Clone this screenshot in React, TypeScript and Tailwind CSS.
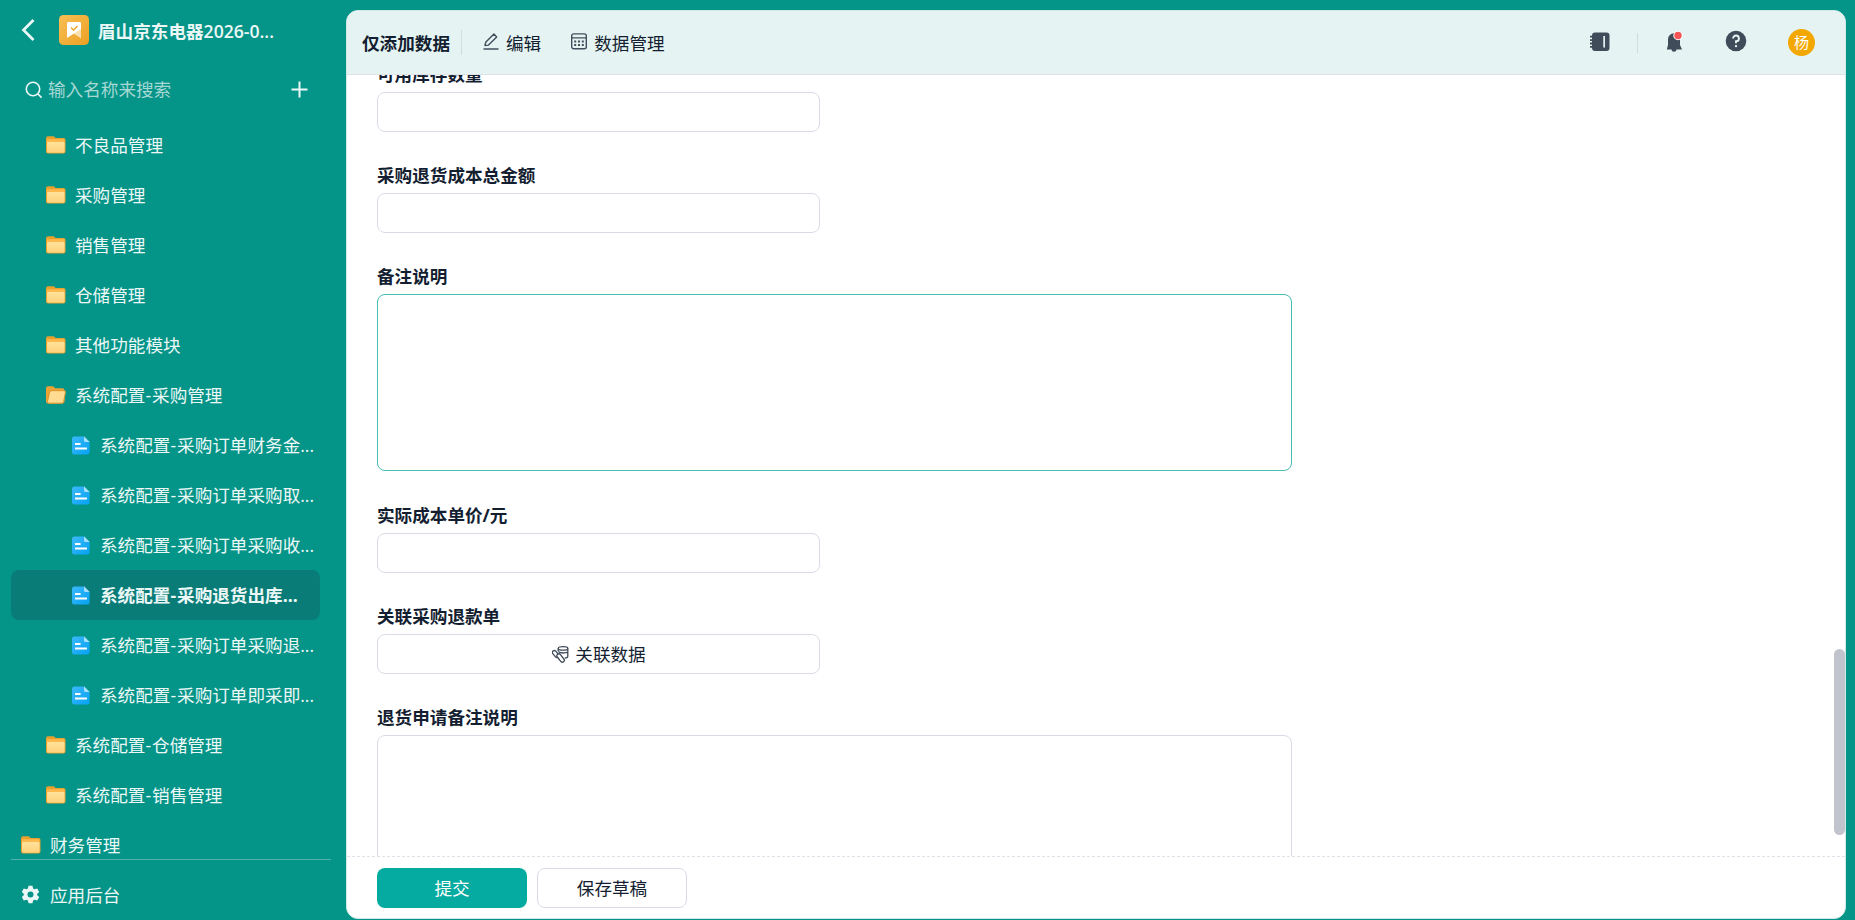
import React from "react";

const CJK = "font-['Open_Sans','Noto_Sans_CJK_SC',sans-serif]";

function Folder() {
  return (
    <svg width="20" height="18" viewBox="0 0 20 18" className="shrink-0">
      <defs>
        <linearGradient id="fold" x1="0" y1="0" x2="0" y2="1">
          <stop offset="0" stopColor="#ffe29c" />
          <stop offset="1" stopColor="#ffd27a" />
        </linearGradient>
      </defs>
      <path d="M2 0.3h5.2c.7 0 1 .2 1.5.7l.9 1H17.5a2 2 0 0 1 2 2V15.5a2 2 0 0 1-2 2H2a2 2 0 0 1-2-2V2.3a2 2 0 0 1 2-2z" fill="#e8a02f" />
      <path d="M1 3.2h17.5v4H1z" fill="#fdb94e" />
      <path d="M1 7.2a1.3 1.3 0 0 1 1.3-1.3h15a1.3 1.3 0 0 1 1.3 1.3v8a1.5 1.5 0 0 1-1.5 1.5H2.5A1.5 1.5 0 0 1 1 15.2z" fill="url(#fold)" />
    </svg>
  );
}

function FolderOpen() {
  return (
    <svg width="20" height="18" viewBox="0 0 20 18" className="shrink-0">
      <path d="M2 0.3h4.5c.7 0 1 .2 1.5.7l1 1.3H16.500a2 2 0 0 1 2 2V15.500a2 2 0 0 1-2 2H2a2 2 0 0 1-2-2V2.300a2 2 0 0 1 2-2z" fill="#eba336" />
      <path d="M5.600 4.700H18a1.400 1.400 0 0 1 1.400 1.700L17.600 15.600a2.100 2.100 0 0 1-2 1.600H3a1.500 1.500 0 0 1-1.500-1.800L3.600 6.300a2.100 2.100 0 0 1 2-1.600z" fill="#ffdc91" stroke="#dc962d" strokeWidth="1" />
    </svg>
  );
}

function Doc() {
  return (
    <svg width="18" height="19" viewBox="0 0 18 19" className="shrink-0">
      <defs>
        <linearGradient id="doc" x1="0" y1="0" x2="1" y2="1">
          <stop offset="0" stopColor="#3db8fb" />
          <stop offset="1" stopColor="#04a2f3" />
        </linearGradient>
      </defs>
      <path d="M2.500 0.500H12L17.600 6V16a2.500 2.500 0 0 1-2.500 2.500H2.500A2.500 2.500 0 0 1 0 16V3A2.500 2.500 0 0 1 2.500 0.500z" fill="url(#doc)" />
      <path d="M12 0.300L17.700 6H13.500A1.500 1.500 0 0 1 12 4.500z" fill="#a5defc" />
      <rect x="3" y="7" width="5.600" height="2" rx="0.300" fill="#fff" />
      <rect x="3" y="11.500" width="12" height="2" rx="0.300" fill="#fff" />
    </svg>
  );
}

function Label({ text }: { text: string }) {
  const parts = text.split("-");
  return (
    <span className="whitespace-nowrap">
      {parts.map((p, i) => (
        <React.Fragment key={i}>
          {i > 0 && <span className="tracking-[1px]">-</span>}
          {p}
        </React.Fragment>
      ))}
    </span>
  );
}

type Item = { t: string; kind: "folder" | "open" | "doc"; level: number; active?: boolean };

const items: Item[] = [
  { t: "不良品管理", kind: "folder", level: 1 },
  { t: "采购管理", kind: "folder", level: 1 },
  { t: "销售管理", kind: "folder", level: 1 },
  { t: "仓储管理", kind: "folder", level: 1 },
  { t: "其他功能模块", kind: "folder", level: 1 },
  { t: "系统配置-采购管理", kind: "open", level: 1 },
  { t: "系统配置-采购订单财务金...", kind: "doc", level: 2 },
  { t: "系统配置-采购订单采购取...", kind: "doc", level: 2 },
  { t: "系统配置-采购订单采购收...", kind: "doc", level: 2 },
  { t: "系统配置-采购退货出库...", kind: "doc", level: 2, active: true },
  { t: "系统配置-采购订单采购退...", kind: "doc", level: 2 },
  { t: "系统配置-采购订单即采即...", kind: "doc", level: 2 },
  { t: "系统配置-仓储管理", kind: "folder", level: 1 },
  { t: "系统配置-销售管理", kind: "folder", level: 1 },
  { t: "财务管理", kind: "folder", level: 0 },
];

const pads = ["pl-[10px] gap-[9px]", "pl-[35px] gap-[9px]", "pl-[61px] gap-[10px]"];

function Row({ item }: { item: Item }) {
  return (
    <div
      className={`flex h-[50px] shrink-0 items-center rounded-lg ${pads[item.level]} ${
        item.active ? "bg-[#0a7c77] font-bold" : ""
      }`}
    >
      {item.kind === "folder" ? <Folder /> : item.kind === "open" ? <FolderOpen /> : <Doc />}
      <Label text={item.t} />
    </div>
  );
}

function Sidebar() {
  return (
    <aside className="flex w-[346px] shrink-0 flex-col pl-[11px] text-[#ecf8f7]">
      <div className="flex h-[60px] items-center pl-[10px]">
        <svg width="14" height="22" viewBox="0 0 14 22" fill="none" stroke="#ecf8f7" strokeWidth="2.700">
          <path d="M12.500 1L2.500 11L12.500 21" />
        </svg>
        <svg width="30" height="30" viewBox="0 0 30 30" className="ml-6">
          <defs>
            <linearGradient id="app" x1="0" y1="0" x2="1" y2="1">
              <stop offset="0" stopColor="#f9bf55" />
              <stop offset="1" stopColor="#eca023" />
            </linearGradient>
          </defs>
          <rect width="30" height="30" rx="4.500" fill="url(#app)" />
          <path d="M8 8.200A1.200 1.200 0 0 1 9.200 7H20.800A1.200 1.200 0 0 1 22 8.200V23L15 18.500L8 23z" fill="#fff" />
          <path d="M15 18.500L22 14V23z" fill="#fbdfae" />
          <path d="M12 12.500L14.500 15L18.500 11" fill="none" stroke="#f2ac38" strokeWidth="1.600" />
        </svg>
        <span className="ml-[9px] mt-0.5 font-semibold">
          <b className="font-bold">眉山京东电器</b>2026-0...
        </span>
      </div>
      <div className="flex h-[60px] items-center pl-[14px]">
        <svg width="18" height="18" viewBox="0 0 18 18" fill="none" stroke="#ecf8f7" strokeWidth="1.600">
          <circle cx="8" cy="8" r="6.700" />
          <path d="M12.700 12.700L16.600 16.600" />
        </svg>
        <span className="mb-0.5 ml-[5px] text-[#a6d8d4]">输入名称来搜索</span>
        <svg width="17" height="17" viewBox="0 0 17 17" fill="none" stroke="#ecf8f7" strokeWidth="2" className="mb-0.5 ml-[120px]">
          <path d="M8.500 0.500v16M0.500 8.500h16" />
        </svg>
      </div>
      <nav className="flex h-[739px] w-[309px] shrink-0 flex-col overflow-hidden">
        {items.map((it) => (
          <Row key={it.t} item={it} />
        ))}
      </nav>
      <div className="flex h-[61px] w-80 items-center gap-[10px] border-t border-[#4fb4ac] pl-[10px] pt-2.5">
        <svg width="19" height="19" viewBox="0 0 24 24" fill="#ecf8f7" className="mb-0.5">
          <path d="M9.500 1h5l.8 3.300 1.900 1.100 3.300-1 2.500 4.300-2.500 2.300v2l2.500 2.300-2.500 4.300-3.300-1-1.900 1.100-.8 3.300h-5l-.8-3.300-1.900-1.100-3.300 1L1 15.300 3.500 13v-2L1 8.700l2.500-4.300 3.300 1 1.900-1.100zM12 8.200a3.800 3.800 0 1 0 0 7.600a3.800 3.800 0 0 0 0-7.600z" fillRule="evenodd" />
        </svg>
        <span>应用后台</span>
      </div>
    </aside>
  );
}

function Header() {
  return (
    <header className="flex h-[64px] shrink-0 items-center border-b border-[#dfe3e8] bg-[#e5f4f3] pl-[15px] pr-[30px]">
      <span className="font-bold">仅添加数据</span>
      <i className="ml-[11px] h-[25px] w-px bg-[#d0dddf]" />
      <svg width="16" height="17" viewBox="0 0 16 17" fill="none" stroke="#434e5c" strokeWidth="1.400" className="mb-0.5 ml-[21px]">
        <path d="M0.500 16H15.500" />
        <path d="M2 12.500L2.700 9.300L10.900 1.100L13.700 3.900L5.500 12.100z" strokeLinejoin="round" />
      </svg>
      <span className="ml-[7px]">编辑</span>
      <svg width="16" height="17" viewBox="0 0 16 17" fill="none" stroke="#434e5c" strokeWidth="1.400" className="mb-0.5 ml-[30px]">
        <rect x="0.700" y="0.900" width="14.600" height="14.900" rx="2" />
        <path d="M0.700 4.900H15.300" />
        <path d="M3.200 8.500H12.800M3.200 12H12.800" strokeWidth="2" strokeDasharray="2 1.800" />
      </svg>
      <span className="ml-[7px]">数据管理</span>
      <div className="ml-auto flex items-center">
        <svg width="20" height="20" viewBox="0 0 20 20" fill="#414c5b" className="mb-0.5">
          <path fillRule="evenodd" d="M5 0.500H16.500A3 3 0 0 1 19.500 3.500V16A3 3 0 0 1 16.500 19H5A3 3 0 0 1 2 16V3.500A3 3 0 0 1 5 0.500zM13.300 4V15.500H15V4z" />
          <path d="M0 3.800h3v1.800H0zM0 7.200h3V9H0zM0 10.600h3v1.800H0zM0 14h3v1.800H0z" />
        </svg>
        <i className="ml-[27px] h-5 w-px bg-[#d0dddf]" />
        <svg width="18" height="22" viewBox="0 0 18 22" className="mb-0.5 ml-[28px]">
          <path d="M8 2.200A6 6 0 0 1 14 8.200V14L16 18.500H0.800L2 14V8.200A6 6 0 0 1 8 2.200zM5.500 18.500h5a2.500 2.300 0 0 1-5 0z" fill="#414c5b" />
          <circle cx="12" cy="4.500" r="4.700" fill="#fff" />
          <circle cx="12" cy="4.500" r="3.700" fill="#f55556" />
        </svg>
        <svg width="22" height="22" viewBox="0 0 22 22" className="mb-1 ml-[41px]">
          <circle cx="11" cy="11" r="10.300" fill="#414c5b" />
          <path d="M8.100 8.400A2.900 2.900 0 1 1 11 11.300V13.300" fill="none" stroke="#e5f4f3" strokeWidth="1.900" />
          <circle cx="11" cy="16.100" r="1.200" fill="#e5f4f3" />
        </svg>
        <span className="ml-[41px] flex h-[27px] w-[27px] items-center justify-center rounded-full bg-[#f2a800] text-[15px] leading-none text-white">杨</span>
      </div>
    </header>
  );
}

function Field({ label, children }: { label: string; children: React.ReactNode }) {
  return (
    <div className="flex shrink-0 flex-col">
      <div className="flex h-[61px] items-end pb-[6px] font-bold">{label}</div>
      {children}
    </div>
  );
}

const box = "rounded-lg border border-[#d9dce6] bg-white";

function LinkData() {
  return (
    <svg width="17" height="17" viewBox="0 0 17 17" fill="none" stroke="#3f4a58" strokeWidth="1.300">
      <path d="M6.200 2.400V5.500M15.800 2.400V10.300C15.800 11.300 14.500 12 12.800 12.100M6.500 5.800C8.500 7.500 15.800 7.300 15.800 5.600" />
      <ellipse cx="11" cy="2.400" rx="4.800" ry="1.700" />
      <rect x="-1.900" y="-4" width="3.800" height="8" rx="1.900" transform="translate(3.600 8) rotate(-40)" />
      <rect x="-2" y="-4.800" width="4" height="9.600" rx="2" transform="translate(8.600 12) rotate(-38)" fill="#fff" />
    </svg>
  );
}

export default function App() {
  return (
    <div className={`flex h-[920px] w-[1855px] overflow-hidden bg-[#059488] text-[17.6px] leading-6 text-[#141e31] ${CJK}`}>
      <Sidebar />
      <main className="mt-[10px] flex h-[909px] w-[1500px] flex-col overflow-hidden rounded-xl border border-[#cfeae7] bg-white">
        <Header />
        <div className="flex h-[781px] shrink-0">
          <div className="flex flex-1 flex-col overflow-hidden pl-[30px]">
            <div className="-mt-[44px] flex flex-col">
              <Field label="可用库存数量">
                <div className={`h-10 w-[443px] ${box}`} />
              </Field>
              <Field label="采购退货成本总金额">
                <div className={`h-10 w-[443px] ${box}`} />
              </Field>
              <Field label="备注说明">
                <div className="mb-px h-[177px] w-[915px] rounded-lg border border-[#45bdb5] bg-white" />
              </Field>
              <Field label="实际成本单价/元">
                <div className={`h-10 w-[443px] ${box}`} />
              </Field>
              <Field label="关联采购退款单">
                <div className={`flex h-10 w-[443px] items-center justify-center gap-[6px] pl-px ${box}`}>
                  <LinkData />
                  <span>关联数据</span>
                </div>
              </Field>
              <Field label="退货申请备注说明">
                <div className={`h-[178px] w-[915px] ${box}`} />
              </Field>
            </div>
          </div>
          <div className="flex w-[11px] flex-col pt-[574px]">
            <div className="h-[186px] rounded-full bg-[#c1c4cd]" />
          </div>
        </div>
        <footer className="flex flex-1 gap-[10px] border-t border-dashed border-[#dfe1e8] pl-[30px] pt-[11px]">
          <button className="flex h-10 w-[150px] items-center justify-center rounded-lg bg-[#05aba0] text-white">提交</button>
          <button className={`flex h-10 w-[150px] items-center justify-center ${box}`}>保存草稿</button>
        </footer>
      </main>
    </div>
  );
}
